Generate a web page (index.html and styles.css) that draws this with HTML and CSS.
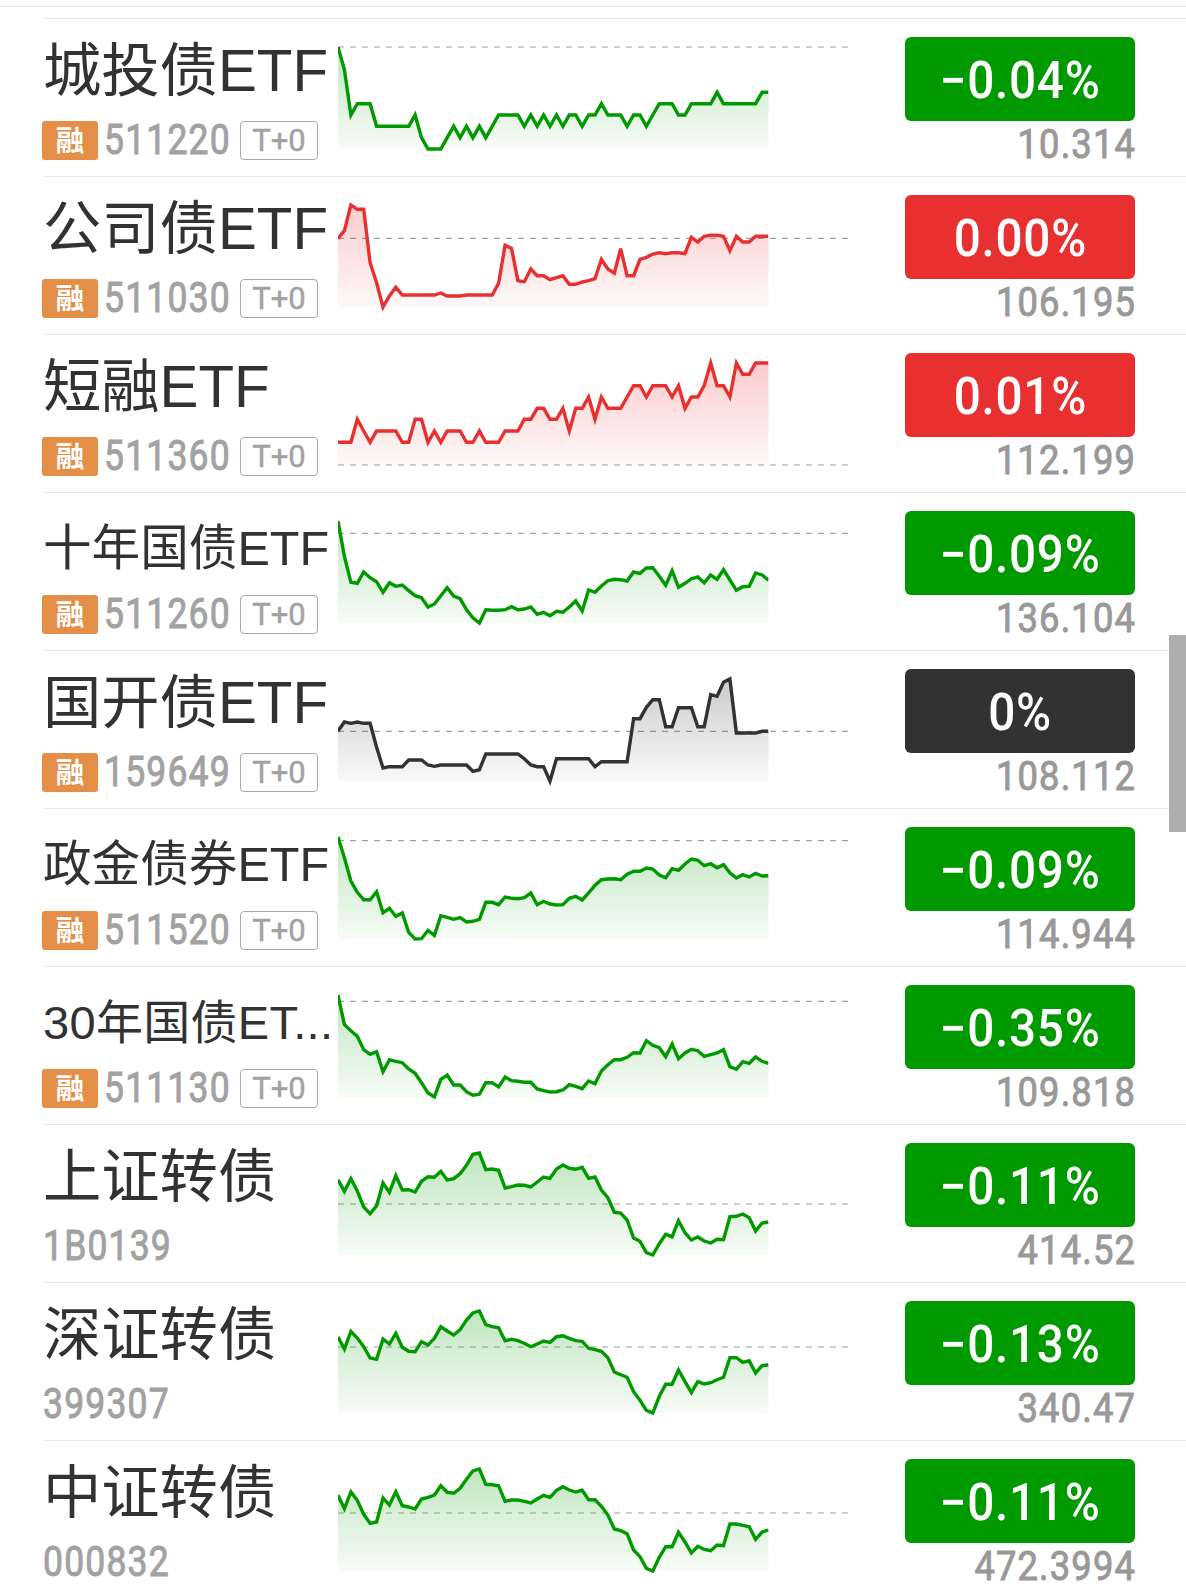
FILE: index.html
```html
<!DOCTYPE html>
<html lang="zh">
	<head>
		<meta charset="utf-8">
		<meta name="viewport" content="width=device-width, initial-scale=1.0">
		<title>债券ETF</title>
		<link rel="stylesheet" href="styles.css">
	</head>
	<body>
		<div class="top-line"></div>
		<ul class="list">
			<li class="row green">
				<div class="info">
					<div class="name">城投债ETF</div>
					<div class="sub"><i class="rong">融</i><span class="code">511220</span><i class="t0">T+0</i></div>
				</div>
				<svg class="chart"></svg>
				<div class="quote">
					<div class="rate"><span>−0.04%</span></div>
					<div class="price">10.314</div>
				</div>
			</li>
			<li class="row red">
				<div class="info">
					<div class="name">公司债ETF</div>
					<div class="sub"><i class="rong">融</i><span class="code">511030</span><i class="t0">T+0</i></div>
				</div>
				<svg class="chart"></svg>
				<div class="quote">
					<div class="rate"><span>0.00%</span></div>
					<div class="price">106.195</div>
				</div>
			</li>
			<li class="row red">
				<div class="info">
					<div class="name">短融ETF</div>
					<div class="sub"><i class="rong">融</i><span class="code">511360</span><i class="t0">T+0</i></div>
				</div>
				<svg class="chart"></svg>
				<div class="quote">
					<div class="rate"><span>0.01%</span></div>
					<div class="price">112.199</div>
				</div>
			</li>
			<li class="row green">
				<div class="info">
					<div class="name small">十年国债ETF</div>
					<div class="sub"><i class="rong">融</i><span class="code">511260</span><i class="t0">T+0</i></div>
				</div>
				<svg class="chart"></svg>
				<div class="quote">
					<div class="rate"><span>−0.09%</span></div>
					<div class="price">136.104</div>
				</div>
			</li>
			<li class="row black">
				<div class="info">
					<div class="name">国开债ETF</div>
					<div class="sub"><i class="rong">融</i><span class="code">159649</span><i class="t0">T+0</i></div>
				</div>
				<svg class="chart"></svg>
				<div class="quote">
					<div class="rate"><span>0%</span></div>
					<div class="price">108.112</div>
				</div>
			</li>
			<li class="row green">
				<div class="info">
					<div class="name small">政金债券ETF</div>
					<div class="sub"><i class="rong">融</i><span class="code">511520</span><i class="t0">T+0</i></div>
				</div>
				<svg class="chart"></svg>
				<div class="quote">
					<div class="rate"><span>−0.09%</span></div>
					<div class="price">114.944</div>
				</div>
			</li>
			<li class="row green">
				<div class="info">
					<div class="name smaller">30年国债ET...</div>
					<div class="sub"><i class="rong">融</i><span class="code">511130</span><i class="t0">T+0</i></div>
				</div>
				<svg class="chart"></svg>
				<div class="quote">
					<div class="rate"><span>−0.35%</span></div>
					<div class="price">109.818</div>
				</div>
			</li>
			<li class="row green">
				<div class="info">
					<div class="name">上证转债</div>
					<div class="sub index"><span class="code">1B0139</span></div>
				</div>
				<svg class="chart"></svg>
				<div class="quote">
					<div class="rate"><span>−0.11%</span></div>
					<div class="price">414.52</div>
				</div>
			</li>
			<li class="row green">
				<div class="info">
					<div class="name">深证转债</div>
					<div class="sub index"><span class="code">399307</span></div>
				</div>
				<svg class="chart"></svg>
				<div class="quote">
					<div class="rate"><span>−0.13%</span></div>
					<div class="price">340.47</div>
				</div>
			</li>
			<li class="row green">
				<div class="info">
					<div class="name">中证转债</div>
					<div class="sub index"><span class="code">000832</span></div>
				</div>
				<svg class="chart"></svg>
				<div class="quote">
					<div class="rate"><span>−0.11%</span></div>
					<div class="price">472.3994</div>
				</div>
			</li>
		</ul>
		<div class="scrollbar"></div>

		<script src="chart.js"></script>
	</body>
</html>
```
FILE: styles.css
```css
*{
	margin: 0;
	padding: 0;
	box-sizing: border-box;
}
body{
	position: relative;
	height: 1591px;
	overflow: hidden;
	background-color: #fff;
	font-family: Roboto, "Noto Sans CJK SC", sans-serif;
}
.top-line{
	height: 12px;
	margin-top: 6px;
	border-top: 1px solid #e8e8e8;
}
.list{
	list-style-type: none;
}
.row{
	display: flex;
	height: 158px;
	margin-left: 45px;
	border-top: 1px solid #e8e8e8;
}
.green{
	--color: #009900;
}
.red{
	--color: #e93030;
}
.black{
	--color: #323232;
}

/* 名称 代码 */
.info{
	width: 293px;
}
.name{
	height: 101px;
	margin-left: -2px;
	line-height: 104px;
	font-family: "Liberation Sans", "Noto Sans CJK SC", sans-serif;
	font-size: 58.3px;
	color: #323232;
	white-space: nowrap;
}
.small{
	padding-top: 3px;
	font-size: 48.6px;
}
.smaller{
	padding-top: 4px;
	font-size: 47px;
	letter-spacing: .3px;
}
.sub{
	display: flex;
	align-items: center;
	height: 40px;
	margin-left: -3px;
}
.index{
	margin-left: -2px;
}
.sub i{
	font-style: normal;
	text-align: center;
}
.rong{
	width: 56px;
	height: 39px;
	margin-right: 6px;
	border-radius: 3px;
	line-height: 36px;
	background-color: #e48e48;
	font-family: "Noto Sans CJK SC", sans-serif;
	font-size: 28.5px;
	font-weight: 700;
	color: #fff;
}
.code{
	width: 136px;
	line-height: 40px;
	font-size: 42px;
	letter-spacing: 1.4px;
	color: #a2a2a2;
	-webkit-text-stroke: 1px #a2a2a2;
	transform: scaleX(.845);
	transform-origin: 0 50%;
}
.t0{
	width: 78px;
	height: 39px;
	border: 1px solid #a8a8a8;
	border-radius: 4px;
	line-height: 38px;
	font-size: 31px;
	color: #a2a2a2;
	-webkit-text-stroke: 0.4px #a2a2a2;
}

/* 分时图 */
.chart{
	width: 510px;
	height: 110px;
	margin-top: 25px;
	overflow: visible;
}
.chart .line{
	fill: none;
	stroke: var(--color);
	stroke-width: 3.4;
}
.chart .close{
	stroke: #a0a0a0;
	stroke-width: 1.2;
	stroke-dasharray: 6 6;
}
.chart stop{
	stop-color: var(--color);
}

/* 涨跌幅 价格 */
.quote{
	width: 230px;
	margin: 18px 0 0 57px;
}
.rate{
	height: 84px;
	border-radius: 6px;
	line-height: 87px;
	background-color: var(--color);
	font-size: 51px;
	font-weight: 500;
	text-align: center;
	color: #fff;
}
.rate span{
	display: inline-block;
	letter-spacing: .8px;
	transform: scaleX(.935);
}
.price{
	margin-right: -1px;
	line-height: 45px;
	font-size: 41.5px;
	letter-spacing: 1.3px;
	text-align: right;
	color: #999;
	-webkit-text-stroke: 1px #999;
	transform: scaleX(.875);
	transform-origin: 100% 50%;
}

.scrollbar{
	position: absolute;
	top: 635px;
	right: 0;
	width: 17px;
	height: 197px;
	background-color: #adadad;
}
```
FILE: chart.js
```js
// close: 昨收线  data: 分时点，数值越大位置越低
let charts = [
	{close: 81, data: [81,149,285,251,251,251,319,319,319,319,319,319,285,353,387,387,387,353,319,353,319,353,319,353,319,285,285,285,285,319,285,319,285,319,285,319,285,285,319,285,285,251,285,285,285,319,285,285,319,285,251,251,251,285,285,251,251,251,251,217,251,251,251,251,251,251,217,217]},
	{close: 175, data: [175,152,75,88,88,248,308,381,348,322,345,345,345,345,345,345,339,348,348,348,345,345,345,345,345,310,196,205,302,305,267,287,287,299,293,287,313,313,306,302,296,238,267,280,206,287,287,238,232,222,218,221,218,218,221,172,186,169,166,166,169,212,169,186,186,169,169,169]},
	{close: 375, data: [307,307,307,238,273,307,273,273,273,273,307,307,238,238,307,273,307,273,273,273,307,307,273,307,307,307,273,273,273,238,238,205,205,238,238,205,273,205,205,171,238,171,205,205,205,171,137,137,171,137,137,137,171,137,205,171,171,137,69,137,137,171,69,103,103,69,69,69]},
	{close: 100, data: [63,169,247,250,216,233,245,277,248,259,255,272,287,293,321,312,287,263,288,296,329,353,369,329,331,331,329,320,329,327,321,343,337,347,334,337,321,303,333,270,277,258,242,238,239,243,216,220,204,203,229,256,212,262,250,236,231,248,225,238,209,240,271,260,259,219,225,241]},
	{close: 214, data: [213,186,190,186,190,190,262,324,320,320,320,300,300,300,315,319,315,315,315,315,315,334,329,282,282,282,282,282,282,296,315,320,320,363,296,296,296,296,296,296,320,305,305,305,305,305,176,176,142,119,119,200,200,143,143,143,200,200,104,109,67,57,219,219,219,219,214,214]},
	{close: 62, data: [51,113,183,217,239,239,215,278,265,289,279,337,357,356,331,346,287,292,298,293,306,304,298,247,247,254,231,235,236,233,219,254,244,252,255,254,235,229,240,219,196,179,177,176,179,163,154,154,144,147,165,173,146,151,132,117,121,137,131,143,134,158,174,164,171,160,168,167]},
	{close: 79, data: [60,149,167,184,224,238,230,290,254,259,263,282,295,323,354,366,313,300,330,330,350,361,358,323,323,336,306,317,319,322,322,342,347,351,350,345,329,334,341,318,326,288,269,254,254,247,233,234,197,211,218,245,207,251,234,223,227,244,239,234,224,275,283,260,265,246,259,265]},
	{close: 222, data: [149,184,146,183,231,251,227,159,187,137,180,179,186,154,140,142,124,150,146,131,106,73,69,119,117,121,174,170,165,166,171,156,141,145,117,105,115,118,112,145,141,180,203,247,249,270,324,334,368,375,341,313,320,272,308,330,321,333,339,328,329,260,259,252,263,303,279,276]},
	{close: 171, data: [141,177,124,144,170,204,208,147,162,130,172,184,185,155,165,145,110,123,135,119,90,69,63,104,110,113,152,148,152,160,170,162,153,157,140,137,145,152,154,175,179,184,203,246,254,262,305,331,361,369,319,283,283,240,275,308,275,282,278,269,262,203,203,217,212,249,227,224]},
	{close: 189, data: [136,176,126,151,193,220,216,144,165,125,167,171,177,147,142,135,107,127,130,115,88,63,57,103,104,107,154,150,150,154,159,147,136,142,121,110,120,126,121,149,149,169,195,237,242,251,300,320,355,363,322,290,290,247,276,309,289,298,302,285,287,222,222,226,230,268,246,240]}
]
let top0 = 3
let height = 102
let width = 430.5

document.querySelectorAll('.chart').forEach(function(svg, i){
	let {close, data} = charts[i]
	let min = Math.min(close, ...data)
	let max = Math.max(close, ...data)
	let y = v => (top0 + (v - min) / (max - min) * height).toFixed(1)
	let points = data.map((v, k) => (k * width / (data.length - 1)).toFixed(1) + ',' + y(v)).join(' ')
	let bottom = top0 + height

	svg.innerHTML = `
		<defs>
			<linearGradient id="fill${i}" x1="0" y1="0" x2="0" y2="1">
				<stop offset="0" stop-opacity=".25"/>
				<stop offset="1" stop-opacity=".03"/>
			</linearGradient>
			<clipPath id="clip${i}"><rect x="0" y="-5" width="${width}" height="120"/></clipPath>
		</defs>
		<line class="close" x1="0" y1="${y(close)}" x2="510" y2="${y(close)}"/>
		<polygon fill="url(#fill${i})" points="0,${bottom} ${points} ${width},${bottom}"/>
		<polyline class="line" clip-path="url(#clip${i})" points="${points}"/>`
})
```
